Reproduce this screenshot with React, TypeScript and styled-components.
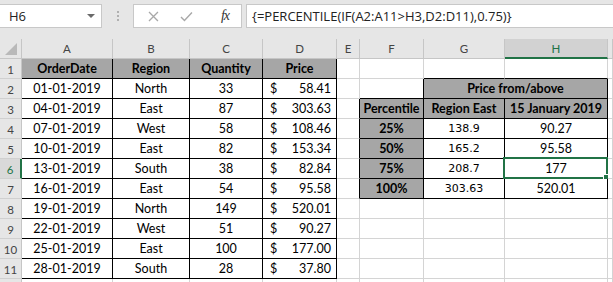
import styled, { createGlobalStyle } from "styled-components";

const GlobalStyle = createGlobalStyle`
  body {
    margin: 0;
    background: #ffffff;
    overflow: hidden;
  }
`;

const GREEN = "#217346";
const GRID = "#d4d4d4";
const BLACK = "#000000";
const FILL = "#a6a6a6";

const Window = styled.div`
  width: 613px;
  height: 282px;
  overflow: hidden;
  background: #ffffff;
  font-family: Lato, "Liberation Sans", sans-serif;
`;

const FormulaBar = styled.div`
  height: 39px;
  box-sizing: border-box;
  padding-top: 4px;
  background: #e6e6e6;
  display: flex;
  align-items: flex-start;
  font-family: "Open Sans", "Noto Sans", sans-serif;
  font-size: 13px;
  color: #222;
`;

const NameBox = styled.div`
  width: 102px;
  height: 24px;
  box-sizing: border-box;
  background: #fff;
  border: 1px solid #c8c8c8;
  border-left: none;
  display: flex;
  align-items: center;
  justify-content: space-between;
  padding: 0 6px 0 9px;
`;

const Arrow = styled.span`
  width: 0;
  height: 0;
  border-left: 4px solid transparent;
  border-right: 4px solid transparent;
  border-top: 4px solid #6a6a6a;
`;

const Grip = styled.div`
  width: 31px;
  height: 24px;
  display: flex;
  flex-direction: column;
  align-items: center;
  justify-content: center;
  gap: 2px;
`;

const Dot = styled.span`
  width: 2px;
  height: 2px;
  background: #b0b0b0;
`;

const FxBox = styled.div`
  width: 109px;
  height: 24px;
  box-sizing: border-box;
  background: #fff;
  border: 1px solid #c8c8c8;
  display: flex;
  align-items: center;
  padding: 0 12px 0 14px;
  gap: 21px;
`;

const Fx = styled.span`
  font-family: "Liberation Serif", serif;
  font-style: italic;
  font-size: 14px;
  color: #333;
  margin-left: 7px;
  letter-spacing: -1px;
`;

const FormulaInput = styled.div`
  flex: 1;
  height: 24px;
  margin-left: 4px;
  box-sizing: border-box;
  background: #fff;
  border: 1px solid #c8c8c8;
  border-right: none;
  display: flex;
  align-items: center;
  padding-left: 5px;
  white-space: nowrap;
`;

const Sheet = styled.div`
  display: grid;
  grid-template-columns: 22px 91px 77px 73px 74px 23px 64px 81px 103px 1fr;
  grid-auto-rows: 20px;
`;

const Corner = styled.div`
  box-sizing: border-box;
  background: #e6e6e6;
  border-right: 1px solid #c6c6c6;
  border-bottom: 1px solid #c6c6c6;
  display: flex;
  align-items: flex-end;
  justify-content: flex-end;
  padding: 0 4px 3px 0;
`;

const ColHead = styled.div<{ $sel?: boolean }>`
  box-sizing: border-box;
  background: ${(p) => (p.$sel ? "#d2d2d2" : "#e6e6e6")};
  border-right: 1px solid #c6c6c6;
  border-bottom: ${(p) => (p.$sel ? `2px solid ${GREEN}` : "1px solid #c6c6c6")};
  color: ${(p) => (p.$sel ? GREEN : "#444")};
  font-size: 11.5px;
  display: flex;
  align-items: center;
  justify-content: center;
`;

const RowHead = styled.div<{ $sel?: boolean }>`
  box-sizing: border-box;
  background: ${(p) => (p.$sel ? "#d9d9d9" : "#e6e6e6")};
  border-right: ${(p) => (p.$sel ? `2px solid ${GREEN}` : "1px solid #c6c6c6")};
  border-bottom: 1px solid #d0d0d0;
  color: ${(p) => (p.$sel ? GREEN : "#444")};
  font-size: 11.5px;
  display: flex;
  align-items: flex-end;
  justify-content: center;
  padding-bottom: 2px;
`;

const Cell = styled.div<{
  $bg?: string;
  $bold?: boolean;
  $align?: "center" | "between";
  $br?: string;
  $bb?: string;
  $alt?: boolean;
  $span?: number;
}>`
  position: relative;
  box-sizing: border-box;
  grid-column: ${(p) => (p.$span ? `span ${p.$span}` : "auto")};
  background: ${(p) => p.$bg || "#fff"};
  border-right: 1px solid ${(p) => p.$br || GRID};
  border-bottom: 1px solid ${(p) => p.$bb || GRID};
  font-family: ${(p) =>
    p.$alt ? `"DejaVu Sans", Verdana, sans-serif` : `Lato, "Liberation Sans", sans-serif`};
  font-size: ${(p) => (p.$alt ? "11px" : "12.5px")};
  font-weight: ${(p) => (p.$bold ? 700 : 400)};
  line-height: 14px;
  color: #000;
  display: flex;
  align-items: flex-end;
  justify-content: ${(p) => (p.$align === "between" ? "space-between" : "center")};
  padding: ${(p) => (p.$align === "between" ? "0 5px 2px 7px" : "0 0 2px 0")};
  white-space: nowrap;
`;

const Selection = styled.div`
  position: absolute;
  top: -2px;
  left: -2px;
  right: -1px;
  bottom: -1px;
  border: 2px solid ${GREEN};
`;

const Handle = styled.div`
  position: absolute;
  right: -4px;
  bottom: -4px;
  width: 5px;
  height: 5px;
  background: ${GREEN};
  border: 1px solid #fff;
`;

const orders = [
  ["01-01-2019", "North", "33", "58.41"],
  ["04-01-2019", "East", "87", "303.63"],
  ["07-01-2019", "West", "58", "108.46"],
  ["10-01-2019", "East", "82", "153.34"],
  ["13-01-2019", "South", "38", "82.84"],
  ["16-01-2019", "East", "54", "95.58"],
  ["19-01-2019", "North", "149", "520.01"],
  ["22-01-2019", "West", "51", "90.27"],
  ["25-01-2019", "East", "100", "177.00"],
  ["28-01-2019", "South", "28", "37.80"],
];

// rows 4..7 of the percentile table
const percentiles = [
  ["25%", "138.9", "90.27"],
  ["50%", "165.2", "95.58"],
  ["75%", "208.7", "177"],
  ["100%", "303.63", "520.01"],
];

const letters = ["A", "B", "C", "D", "E", "F", "G", "H", ""];

function LeftTable({ row }: { row: number }) {
  if (row === 1) {
    return (
      <>
        {["OrderDate", "Region", "Quantity", "Price"].map((t) => (
          <Cell key={t} $bg={FILL} $bold $br={BLACK} $bb={BLACK}>
            {t}
          </Cell>
        ))}
      </>
    );
  }
  const o = orders[row - 2];
  if (!o) {
    return (
      <>
        <Cell />
        <Cell />
        <Cell />
        <Cell />
      </>
    );
  }
  return (
    <>
      <Cell $br={BLACK} $bb={BLACK}>{o[0]}</Cell>
      <Cell $br={BLACK} $bb={BLACK}>{o[1]}</Cell>
      <Cell $br={BLACK} $bb={BLACK}>{o[2]}</Cell>
      <Cell $br={BLACK} $bb={BLACK} $align="between">
        <span>$</span>
        <span>{o[3]}</span>
      </Cell>
    </>
  );
}

function RightTable({ row }: { row: number }) {
  const inTable = row >= 3 && row <= 7;
  const eCell = <Cell $br={inTable ? BLACK : GRID} />;

  if (row === 1) {
    return (
      <>
        {eCell}
        <Cell />
        <Cell $bb={BLACK} />
        <Cell $bb={BLACK} />
      </>
    );
  }
  if (row === 2) {
    return (
      <>
        {eCell}
        <Cell $br={BLACK} $bb={BLACK} />
        <Cell $span={2} $bg={FILL} $bold $br={BLACK} $bb={BLACK}>
          Price from/above
        </Cell>
      </>
    );
  }
  if (row === 3) {
    return (
      <>
        {eCell}
        <Cell $bg={FILL} $bold $br={BLACK} $bb={BLACK}>Percentile</Cell>
        <Cell $bg={FILL} $bold $br={BLACK} $bb={BLACK}>Region East</Cell>
        <Cell $bg={FILL} $bold $br={BLACK} $bb={BLACK}>15 January 2019</Cell>
      </>
    );
  }
  if (inTable) {
    const p = percentiles[row - 4];
    return (
      <>
        {eCell}
        <Cell $bg={FILL} $bold $br={BLACK} $bb={BLACK}>{p[0]}</Cell>
        <Cell $alt $br={BLACK} $bb={BLACK}>{p[1]}</Cell>
        <Cell $br={BLACK} $bb={BLACK}>
          {p[2]}
          {row === 6 && (
            <Selection>
              <Handle />
            </Selection>
          )}
        </Cell>
      </>
    );
  }
  return (
    <>
      {eCell}
      <Cell />
      <Cell />
      <Cell />
    </>
  );
}

function Row({ row }: { row: number }) {
  // row 12 only peeks in at the bottom edge, so its number isn't visible
  return (
    <>
      <RowHead $sel={row === 6}>{row < 12 ? row : ""}</RowHead>
      <LeftTable row={row} />
      <RightTable row={row} />
      <Cell />
    </>
  );
}

function App() {
  const rows = Array.from({ length: 12 }, (_, i) => i + 1);

  return (
    <Window>
      <GlobalStyle />
      <FormulaBar>
        <NameBox>
          <span>H6</span>
          <Arrow />
        </NameBox>
        <Grip>
          <Dot />
          <Dot />
          <Dot />
        </Grip>
        <FxBox>
          <svg width="11" height="11" viewBox="0 0 11 11">
            <path d="M1 1 L10 10 M10 1 L1 10" stroke="#a8a8a8" strokeWidth="1.3" fill="none" />
          </svg>
          <svg width="13" height="11" viewBox="0 0 13 11">
            <path d="M1 6 L4.5 9.5 L12 1.5" stroke="#a8a8a8" strokeWidth="1.4" fill="none" />
          </svg>
          <Fx>fx</Fx>
        </FxBox>
        <FormulaInput>{"{=PERCENTILE(IF(A2:A11>H3,D2:D11),0.75)}"}</FormulaInput>
      </FormulaBar>

      <Sheet>
        <Corner>
          <svg width="12" height="12" viewBox="0 0 12 12">
            <polygon points="12,0 12,12 0,12" fill="#b9b9b9" />
          </svg>
        </Corner>
        {letters.map((l, i) => (
          <ColHead key={i} $sel={l === "H"}>
            {l}
          </ColHead>
        ))}

        {rows.map((r) => (
          <Row key={r} row={r} />
        ))}
      </Sheet>
    </Window>
  );
}

export default App;
